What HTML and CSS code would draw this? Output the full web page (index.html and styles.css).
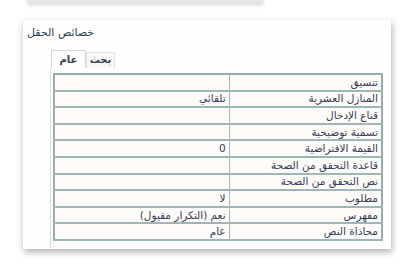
FILE: index.html
```html
<!DOCTYPE html>
<html lang="ar">
<head>
<meta charset="utf-8">
<link rel="stylesheet" href="styles.css">
</head>
<body>
<div class="prev"></div>
<div class="panel">
  <div class="title">خصائص الحقل</div>
  <div class="tabs">
    <div class="tab active">عام</div>
    <div class="tab">بحث</div>
  </div>
  <div class="pane">
    <table class="props" dir="rtl">
      <tr><td class="name">تنسيق</td><td class="val"></td></tr>
      <tr><td class="name">المنازل العشرية</td><td class="val">تلقائي</td></tr>
      <tr><td class="name">قناع الإدخال</td><td class="val"></td></tr>
      <tr><td class="name">تسمية توضيحية</td><td class="val"></td></tr>
      <tr><td class="name">القيمة الافتراضية</td><td class="val">0</td></tr>
      <tr><td class="name">قاعدة التحقق من الصحة</td><td class="val"></td></tr>
      <tr><td class="name">نص التحقق من الصحة</td><td class="val"></td></tr>
      <tr><td class="name">مطلوب</td><td class="val">لا</td></tr>
      <tr><td class="name">مفهرس</td><td class="val">نعم (التكرار مقبول)</td></tr>
      <tr><td class="name">محاذاة النص</td><td class="val">عام</td></tr>
    </table>
  </div>
</div>
</body>
</html>
```

FILE: styles.css
```css
html, body {
  margin: 0;
  padding: 0;
  background: #ffffff;
}
body {
  width: 416px;
  height: 272px;
  overflow: hidden;
  font-family: "DejaVu Sans", "Noto Sans", sans-serif;
}
.prev {
  width: 236px;
  height: 3px;
  margin-left: 27px;
  background: #e6e6e6;
  box-shadow: 0 1px 4px rgba(0, 0, 0, 0.25);
}
.panel {
  box-sizing: border-box;
  width: 368px;
  height: 229px;
  margin: 17px 0 0 23px;
  padding-top: 6px;
  background: #fffefd;
  box-shadow: 1px 3px 7px rgba(0, 0, 0, 0.32);
  display: flex;
  flex-direction: column;
}
.title {
  padding-left: 4px;
  font-size: 11px;
  line-height: 14px;
  color: #2c3f55;
  direction: ltr;
  text-align: left;
}
.tabs {
  display: flex;
  align-items: flex-end;
  margin: 10px 0 0 28px;
  height: 18px;
}
.tab {
  box-sizing: border-box;
  height: 16px;
  width: 29px;
  font-size: 10px;
  font-weight: bold;
  line-height: 14px;
  text-align: center;
  color: #34414f;
  background: #f6f7f6;
  border: 1px solid #dde3e6;
  border-bottom: none;
}
.tab.active {
  height: 18px;
  width: 35px;
  background: #ffffff;
  border-color: #cfd9dd;
  line-height: 17px;
}
.pane {
  flex: 1;
  margin-left: 27px;
  margin-right: 6px;
  padding: 5px 0 0 2px;
  border-left: 1px solid #d3dcdf;
}
.props {
  width: 330px;
  border-collapse: collapse;
  border: 2px solid #93adb1;
  background: #fffbf8;
}
.props td {
  height: 14.6px;
  padding: 0 3px;
  border-bottom: 2px solid #9fb6b9;
  font-size: 10.5px;
  line-height: 13px;
  color: #33405a;
  text-align: right;
  white-space: nowrap;
}
.props td.name {
  width: 147px;
  border-left: 1.5px solid #a2b7ba;
}
.props td.val {
  width: 171px;
}
```
